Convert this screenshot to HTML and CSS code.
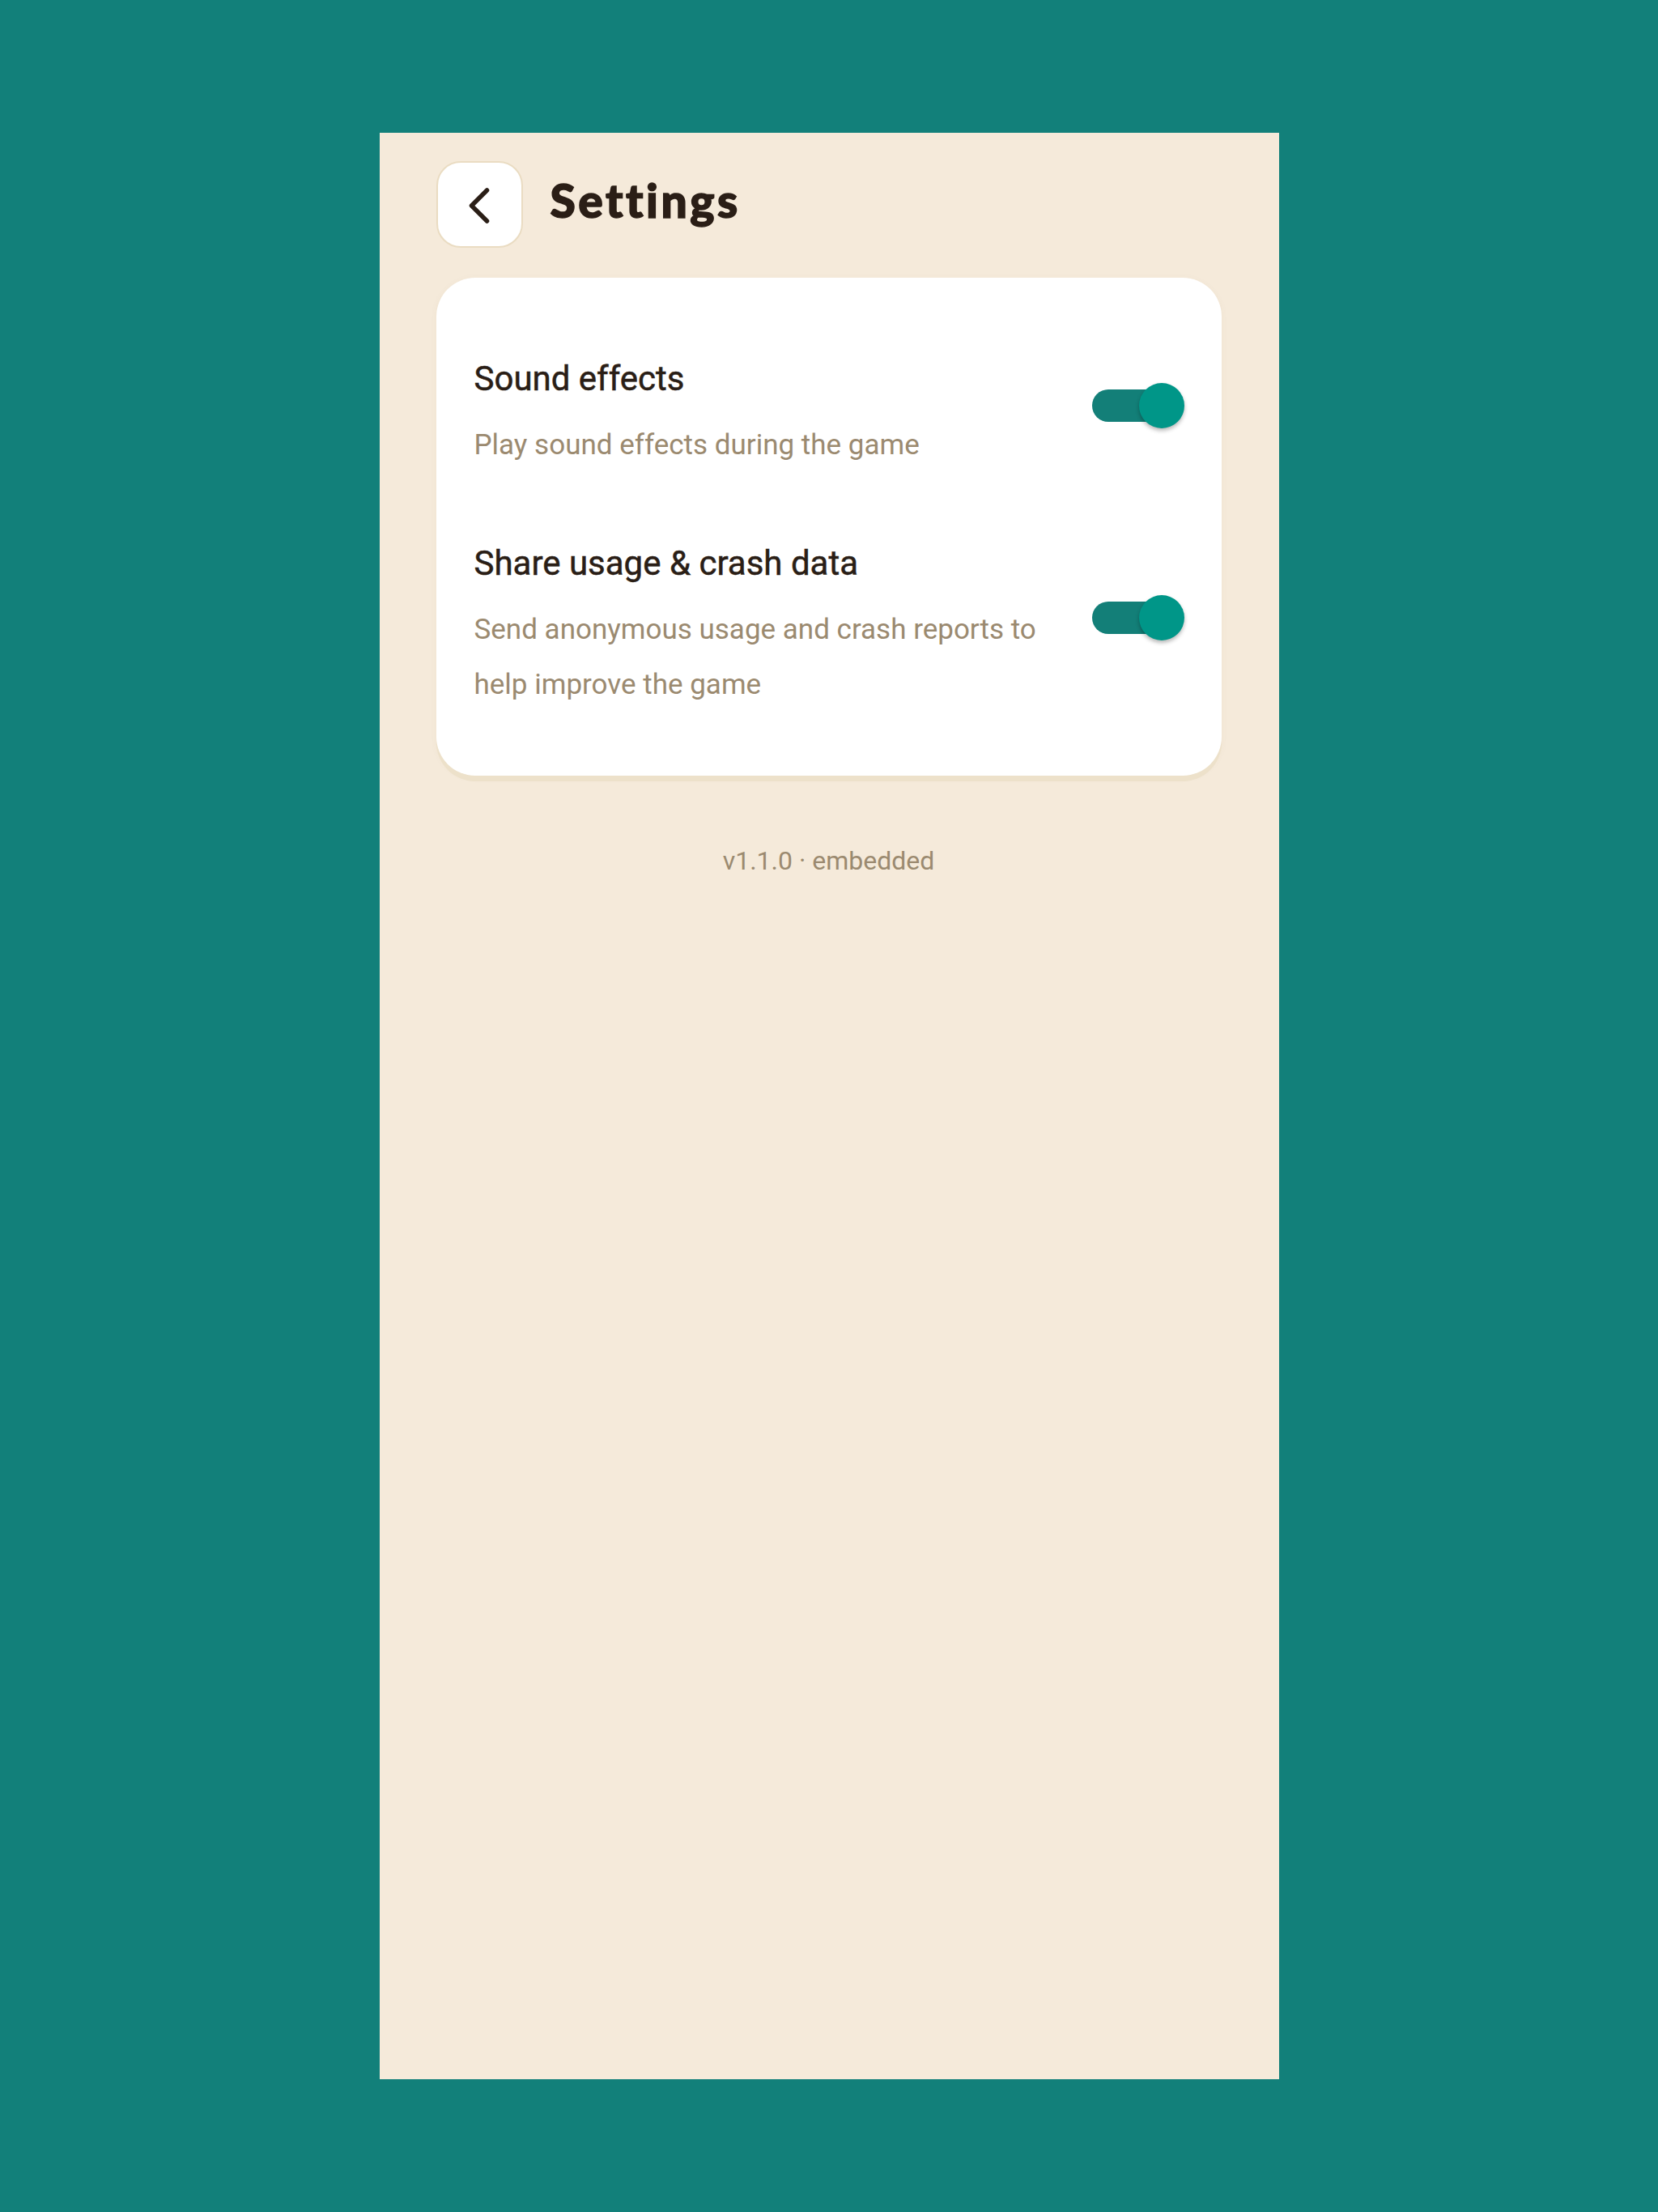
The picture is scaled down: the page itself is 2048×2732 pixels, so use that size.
FILE: index.html
```html
<!DOCTYPE html>
<html lang="en">
<head>
    <meta charset="UTF-8">
    <meta name="viewport" content="width=device-width, initial-scale=1.0">
    <title>Settings</title>
    <link rel="stylesheet" href="styles.css">
</head>
<body>
    <main class="screen">
        <header class="topbar">
            <button class="back-btn" aria-label="Back">
                <svg width="26" height="44" viewBox="0 0 26 44">
                    <path d="M22.5 3 L3.5 22 L22.5 41" fill="none" stroke="#2a1e16" stroke-width="5.5" stroke-linecap="round" stroke-linejoin="round"/>
                </svg>
            </button>
            <h1>Settings</h1>
        </header>

        <section class="card">
            <div class="row">
                <div class="row-text">
                    <h3>Sound effects</h3>
                    <p>Play sound effects during the game</p>
                </div>
                <label class="switch on">
                    <span class="track"></span>
                    <span class="thumb"></span>
                </label>
            </div>
            <div class="row">
                <div class="row-text">
                    <h3>Share usage &amp; crash data</h3>
                    <p>Send anonymous usage and crash reports to help improve the game</p>
                </div>
                <label class="switch on">
                    <span class="track"></span>
                    <span class="thumb"></span>
                </label>
            </div>
        </section>

        <p class="version">v1.1.0 · embedded</p>
    </main>
</body>
</html>
```

FILE: styles.css
```css
body {
    margin: 0;
    min-height: 100vh;
    background: #12807a;
    display: flex;
    align-items: center;
    justify-content: center;
    font-family: Roboto, "Noto Sans", sans-serif;
    color: #2a1e16;
}

.screen {
    box-sizing: border-box;
    width: 1111px;
    height: 2404px;
    background: #f5eada;
    padding: 35px 71px 0 70px;
}

.topbar {
    display: flex;
    align-items: center;
    gap: 34px;
    margin-bottom: 37px;
}

.back-btn {
    box-sizing: border-box;
    width: 107px;
    height: 107px;
    background: #fff;
    border: 2px solid #eadcc2;
    border-radius: 30px;
    display: flex;
    align-items: center;
    justify-content: center;
    padding: 0;
    cursor: pointer;
}

.back-btn svg {
    margin-top: 3px;
}

.topbar h1 {
    margin: 0 0 12px;
    font-family: Lato, sans-serif;
    font-weight: 900;
    font-size: 57px;
    letter-spacing: 3.5px;
    -webkit-text-stroke: 1.5px #2a1e16;
    color: #2a1e16;
}

.card {
    background: #fff;
    border-radius: 48px;
    padding: 55px 46px 36px 47px;
    box-shadow: 0 7px 0 #ede1ca, 0 2px 10px rgba(120, 90, 40, 0.05);
}

.row {
    display: flex;
    align-items: center;
    justify-content: space-between;
    gap: 24px;
    padding: 42px 0;
}

.row-text {
    flex: 1;
    max-width: 710px;
}

.row-text h3 {
    margin: 0 0 20px;
    font-size: 42px;
    line-height: 56px;
    font-weight: 400;
    -webkit-text-stroke: 0.5px #2a1e16;
    color: #2a1e16;
}

.row-text p {
    margin: 0;
    font-size: 35px;
    line-height: 68px;
    color: #9b8a70;
}

/* toggle switch */
.switch {
    position: relative;
    width: 114px;
    height: 57px;
    flex-shrink: 0;
    margin-bottom: 22px;
}

.switch .track {
    position: absolute;
    left: 0;
    top: 8px;
    width: 97px;
    height: 40px;
    border-radius: 20px;
    background: #bdb3a3;
}

.switch .thumb {
    position: absolute;
    top: 0;
    left: 0;
    width: 56px;
    height: 56px;
    border-radius: 50%;
    background: #fafafa;
    box-shadow: 0 3px 5px rgba(0, 0, 0, 0.28);
}

.switch.on .track {
    background: #137f78;
}

.switch.on .thumb {
    left: 58px;
    background: #009688;
}

.version {
    margin: 85px 0 0;
    text-align: center;
    font-size: 32px;
    line-height: 40px;
    color: #9b8a70;
}
```
